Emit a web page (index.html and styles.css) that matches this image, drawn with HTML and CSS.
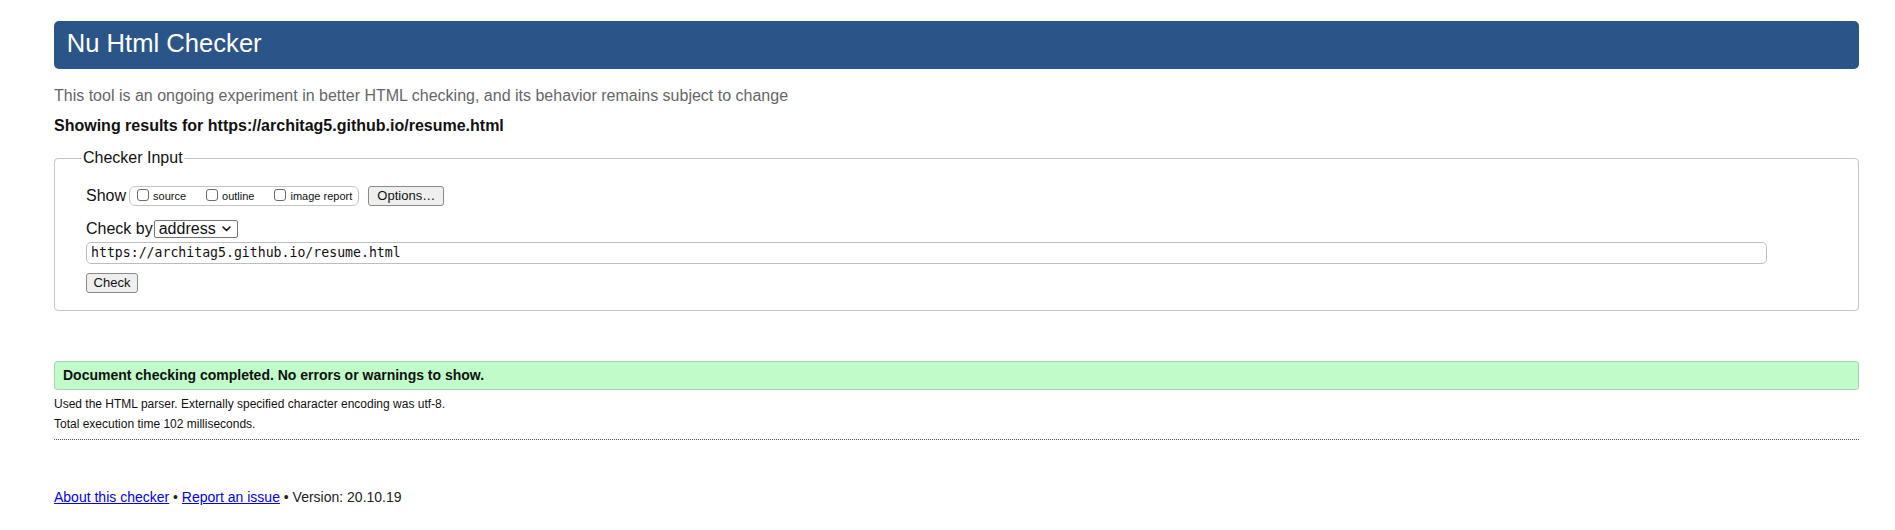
FILE: index.html
```html
<!DOCTYPE html>
<html lang="en">
<head>
<meta charset="utf-8">
<title>Showing results for https://architag5.github.io/resume.html - Nu Html Checker</title>
<link rel="stylesheet" href="styles.css">
</head>
<body>
<h1 class="title">Nu Html Checker</h1>
<p class="intro">This tool is an ongoing experiment in better HTML checking, and its behavior remains subject to change</p>
<p class="showing">Showing results for https://architag5.github.io/resume.html</p>
<form class="form">
  <fieldset class="checker">
    <legend class="checker-legend">Checker Input</legend>
    <div class="row show-row">
      <span class="row-label">Show</span>
      <span class="opts">
        <label class="opt"><input type="checkbox" class="cb">source</label>
        <label class="opt"><input type="checkbox" class="cb">outline</label>
        <label class="opt"><input type="checkbox" class="cb">image report</label>
      </span>
      <button type="button" class="btn btn-options">Options…</button>
    </div>
    <div class="row by-row">
      <span class="row-label">Check by</span>
      <span class="select-wrap">
        <select class="select"><option>address</option></select>
        <svg class="chev" width="9" height="6" viewBox="0 0 9 6" aria-hidden="true"><path d="M1 1 L4.5 4.5 L8 1" fill="none" stroke="#111" stroke-width="1.6" stroke-linecap="round" stroke-linejoin="round"/></svg>
      </span>
    </div>
    <div class="row url-row">
      <input type="text" class="url" value="https://architag5.github.io/resume.html">
    </div>
    <div class="row submit-row">
      <button type="button" class="btn btn-check">Check</button>
    </div>
  </fieldset>
</form>
<div class="success">Document checking completed. No errors or warnings to show.</div>
<p class="details details-first">Used the HTML parser. Externally specified character encoding was utf-8.</p>
<p class="details">Total execution time 102 milliseconds.</p>
<hr class="sep">
<p class="footer"><a href="#" class="link">About this checker</a> • <a href="#" class="link">Report an issue</a> • Version: 20.10.19</p>
</body>
</html>
```
FILE: styles.css
```css
* {
  box-sizing: border-box;
}

body {
  margin: 0;
  padding: 21px 36px 20px 54px;
  font-family: "Liberation Sans", Arial, Helvetica, sans-serif;
  color: #111;
  background: #fff;
}

.title {
  margin: 0;
  background: #2b5588;
  color: #fff;
  font-size: 25.6px;
  font-weight: normal;
  line-height: 33px;
  padding: 6px 12.8px 9px;
  border-radius: 5px;
}

.intro {
  margin: 17px 0 0;
  font-size: 16px;
  line-height: 20px;
  color: #666;
}

.showing {
  margin: 10px 0 0;
  font-size: 16px;
  line-height: 20px;
  font-weight: bold;
  color: #111;
}

.form {
  margin: 12px 0 0;
}

.checker {
  margin: 0;
  min-width: 0;
  padding: 17.5px 30px 17px 31px;
  border: 1px solid #c6c6c6;
  border-radius: 4px;
}

.checker-legend {
  font-size: 16px;
  line-height: 20px;
  padding: 0 1px;
  margin-left: -4px;
  color: #111;
}

.row {
  display: flex;
  align-items: center;
}

.row-label {
  font-size: 16px;
  line-height: 20px;
}

.show-row {
  height: 20px;
}

.opts {
  display: inline-flex;
  align-items: center;
  height: 20px;
  margin-left: 3px;
  padding: 0 6px 0 7px;
  border: 1px solid #c3c3c3;
  border-radius: 6px;
}

.opt {
  display: inline-flex;
  align-items: center;
  font-size: 11px;
  line-height: 14px;
  margin-right: 20px;
  color: #111;
}

.opt:last-child {
  margin-right: 0;
}

.cb {
  appearance: none;
  -webkit-appearance: none;
  width: 12px;
  height: 12px;
  margin: 0 4px 2px 0;
  border: 1px solid #6b6b6b;
  border-radius: 3px;
  background: #fff;
}

.btn {
  font-family: "Liberation Sans", Arial, Helvetica, sans-serif;
  font-size: 13px;
  line-height: 16px;
  color: #111;
  background: #efefef;
  border: 1px solid #8a8a8a;
  border-radius: 3px;
  padding: 1px 6px;
  height: 20px;
}

.btn-options {
  margin-left: 9px;
  width: 76px;
}

.by-row {
  margin-top: 13px;
}

.select-wrap {
  position: relative;
  display: inline-flex;
  margin-left: 1px;
}

.select {
  appearance: none;
  -webkit-appearance: none;
  width: 84px;
  height: 18px;
  padding: 0 0 0 4px;
  font-family: "Liberation Sans", Arial, Helvetica, sans-serif;
  font-size: 16px;
  line-height: 16px;
  color: #111;
  background: #fff;
  border: 1px solid #767676;
  border-radius: 2px;
}

.chev {
  position: absolute;
  right: 7px;
  top: 6px;
  pointer-events: none;
}

.url-row {
  margin-top: 3px;
}

.url {
  width: calc(100% - 61px);
  height: 22px;
  padding: 0 4px;
  font-family: "DejaVu Sans Mono", "Liberation Mono", monospace;
  font-size: 13.2px;
  color: #111;
  background: #fff;
  border: 1px solid #bdbdbd;
  border-radius: 5px;
}

.submit-row {
  margin-top: 9px;
}

.btn-check {
  width: 52px;
  padding: 1px 4px;
}

.success {
  margin-top: 50px;
  padding: 5px 8px;
  font-size: 14px;
  line-height: 17px;
  font-weight: bold;
  color: #111;
  background: #c1fbc9;
  border: 1px solid #a9d6ae;
  border-radius: 3px;
}

.details {
  margin: 5px 0 0;
  font-size: 12px;
  line-height: 15px;
  color: #111;
}

.details-first {
  margin-top: 7px;
}

.sep {
  margin: 7px 0 0;
  height: 0;
  border: 0;
  border-top: 1px dotted #555;
}

.footer {
  margin: 48px 0 0;
  font-size: 14px;
  line-height: 18px;
  color: #222;
}

.link {
  color: #0000ee;
  text-decoration: underline;
}
```
